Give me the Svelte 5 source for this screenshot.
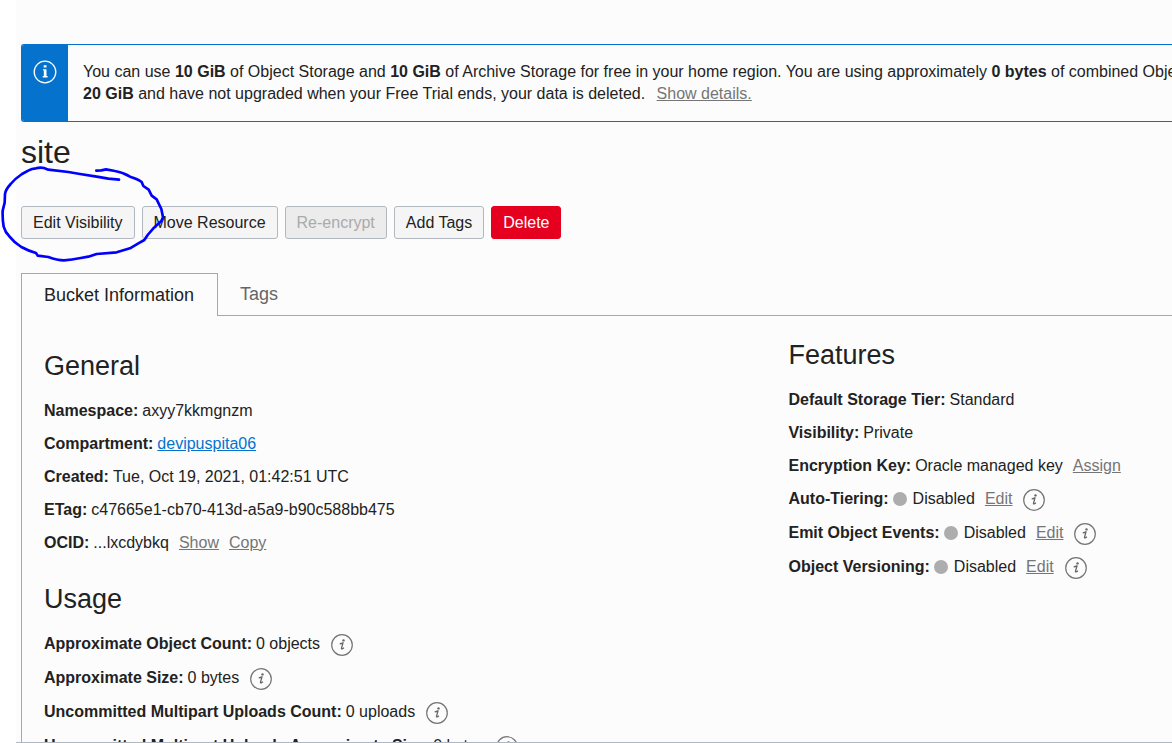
<script>
  const general = [
    { label: 'Namespace', value: 'axyy7kkmgnzm' },
    { label: 'Compartment', link: 'devipuspita06' },
    { label: 'Created', value: 'Tue, Oct 19, 2021, 01:42:51 UTC' },
    { label: 'ETag', value: 'c47665e1-cb70-413d-a5a9-b90c588bb475' },
    { label: 'OCID', value: '...lxcdybkq', actions: ['Show', 'Copy'] }
  ];
  const usage = [
    { label: 'Approximate Object Count', value: '0 objects', info: true },
    { label: 'Approximate Size', value: '0 bytes', info: true },
    { label: 'Uncommitted Multipart Uploads Count', value: '0 uploads', info: true },
    { label: 'Uncommitted Multipart Uploads Approximate Size', value: '0 bytes', info: true }
  ];
  const features = [
    { label: 'Default Storage Tier', value: 'Standard' },
    { label: 'Visibility', value: 'Private' },
    { label: 'Encryption Key', value: 'Oracle managed key', actions: ['Assign'] },
    { label: 'Auto-Tiering', value: 'Disabled', dot: true, actions: ['Edit'], info: true },
    { label: 'Emit Object Events', value: 'Disabled', dot: true, actions: ['Edit'], info: true },
    { label: 'Object Versioning', value: 'Disabled', dot: true, actions: ['Edit'], info: true }
  ];
</script>

{#snippet details(rows)}
  <dl>
    {#each rows as row}
      <div class="row" class:tall={row.info}>
        <dt>{row.label}:</dt>
        <dd>
          {#if row.dot}<span class="dot"></span>{/if}
          {#if row.link}<a class="primary" href="#compartment">{row.link}</a>{/if}
          {#if row.value}<span>{row.value}</span>{/if}
          {#each row.actions ?? [] as action}
            <a class="action" href="#{action.toLowerCase()}">{action}</a>
          {/each}
          {#if row.info}
            <button class="info" aria-label="About {row.label}">
              <svg viewBox="0 0 22 22" width="22" height="22" aria-hidden="true">
                <circle cx="11" cy="11" r="10.3" fill="none" stroke="#757575" stroke-width="1.2" />
                <circle cx="12.5" cy="6.4" r="1.2" fill="#666" />
                <path d="M8.7 9.8 Q10.4 9.6 12 8.8 L10.5 14.2 Q10.2 15.9 12.9 13.7" fill="none" stroke="#666" stroke-width="1.3" stroke-linejoin="round" />
              </svg>
            </button>
          {/if}
        </dd>
      </div>
    {/each}
  </dl>
{/snippet}

<main>
  <section class="banner">
    <div class="banner-icon">
      <svg viewBox="0 0 24 24" width="24" height="24" aria-hidden="true">
        <circle cx="12" cy="12" r="10.8" fill="none" stroke="#fff" stroke-width="1.3" />
        <path d="M10.7 5.2h2.8v2.4h-2.8z M10 9.2h3.5v6.8h1.1v1.4H9.7v-1.4h1.1v-5.4H10z" fill="#fff" />
      </svg>
    </div>
    <p>
      You can use <b>10 GiB</b> of Object Storage and <b>10 GiB</b> of Archive Storage for free in your home region. You are using approximately <b>0 bytes</b> of combined Object<br />
      <b>20 GiB</b> and have not upgraded when your Free Trial ends, your data is deleted.
      <a class="more" href="#details">Show details.</a>
    </p>
  </section>

  <header>
    <h1>site</h1>
    <div class="buttons">
      <button>Edit Visibility</button>
      <button>Move Resource</button>
      <button disabled>Re-encrypt</button>
      <button>Add Tags</button>
      <button class="danger">Delete</button>
    </div>
    <svg class="ink" viewBox="0 0 504 420" width="168" height="140" aria-hidden="true">
      <path d="M357 149 L325 146 L290 140 L240 132 L205 126 L145 119 L132 114 Q120 111 108 115 Q95 116 86 121 L66 132 Q45 146 32 162 Q16 180 15 192 L14 218 L8 242 Q7 268 11 290 Q16 308 28 319 Q42 337 64 351 Q84 362 108 369 L113 377 L145 381 Q172 391 192 391 Q215 389 242 384 L265 380 L290 372 L350 367 L390 355 L415 340 L433 330 L443 315 L462 293 L484 273 L489 262 L484 237 L470 208 L455 197 L446 179 L430 168 L425 156 Q414 147 390 140 Q370 127 345 123 L318 118 L304 121 L289 122" />
    </svg>
  </header>

  <div class="tabs" role="tablist">
    <button class="tab active" role="tab" aria-selected="true">Bucket Information</button>
    <button class="tab" role="tab" aria-selected="false">Tags</button>
  </div>

  <div class="panel" role="tabpanel">
    <div class="column left">
      <h2>General</h2>
      {@render details(general)}
      <h2 class="next">Usage</h2>
      {@render details(usage)}
    </div>
    <div class="column">
      <h2>Features</h2>
      {@render details(features)}
    </div>
  </div>
</main>

<style>
  :global(body) {
    background: #fff;
  }
  main {
    box-sizing: border-box;
    height: 100vh;
    margin-left: 16px;
    padding: 44px 0 0 5px;
    overflow-x: visible;
    overflow-y: clip;
    background: #fcfcfc;
    border-bottom: 1px solid #b1b7c1;
    color: #222;
    font: 16px/22px "Liberation Sans", Arial, sans-serif;
  }
  .banner {
    display: flex;
    overflow: hidden;
    border: 1px solid #0572ce;
    border-width: 1px 0 1px 1px;
    border-radius: 3px 0 0 3px;
  }
  .banner-icon {
    flex: none;
    width: 46px;
    padding-top: 15px;
    background: #0572ce;
    text-align: center;
  }
  .banner-icon svg {
    margin-right: 1px;
  }
  .banner p {
    margin: 0;
    padding: 16px 0 16px 15px;
    white-space: nowrap;
  }
  .more {
    margin-left: 7px;
    color: #757575;
  }
  header {
    position: relative;
    padding-top: 12px;
  }
  h1 {
    margin: 0 0 36px;
    font-size: 32px;
    font-weight: 400;
    line-height: 36px;
  }
  .buttons {
    display: flex;
    gap: 7px;
  }
  button {
    font: inherit;
  }
  .buttons button {
    height: 33px;
    padding: 0 11px;
    border: 1px solid #b1b8c0;
    border-radius: 3px;
    background: #f5f5f5;
    color: #222;
    white-space: nowrap;
  }
  .buttons button:disabled {
    background: #ececec;
    color: #aaa;
  }
  .buttons .danger {
    border-color: #e5001f;
    background: #e5001f;
    color: #fff;
  }
  .ink {
    position: absolute;
    top: 8px;
    left: -21px;
    pointer-events: none;
  }
  .ink path {
    fill: none;
    stroke: #00f;
    stroke-width: 8;
    stroke-linecap: round;
    stroke-linejoin: round;
  }
  .tabs {
    display: flex;
    margin-top: 34px;
  }
  .tabs::after {
    content: "";
    flex: 1;
    border-bottom: 1px solid #a8a8a8;
  }
  .tab {
    height: 43px;
    padding: 0 22px;
    border: 0;
    border-bottom: 1px solid #a8a8a8;
    background: none;
    color: #666;
    font-size: 18px;
  }
  .tab.active {
    padding: 0 23px 0 22px;
    border: 1px solid #a8a8a8;
    border-bottom: 0;
    color: #222;
  }
  .panel {
    display: grid;
    grid-template-columns: 66fr 34fr;
    padding: 23px 0 0 22px;
    border-left: 1px solid #a8a8a8;
  }
  .left {
    padding-top: 11px;
  }
  h2 {
    margin: 0 0 12px;
    font-size: 27px;
    font-weight: 400;
    line-height: 32px;
  }
  .next {
    margin-top: 24px;
  }
  dl {
    margin: 0;
  }
  .row {
    display: flex;
    align-items: center;
    gap: 4px;
    height: 33px;
    white-space: nowrap;
  }
  .row.tall {
    height: 34px;
  }
  dt {
    font-weight: 700;
  }
  dd {
    display: flex;
    align-items: center;
    margin: 0;
  }
  .dot {
    width: 14px;
    height: 14px;
    margin-right: 6px;
    border-radius: 50%;
    background: #adadad;
  }
  .primary {
    color: #0572ce;
  }
  .action {
    margin-left: 10px;
    color: #757575;
  }
  .info {
    display: flex;
    margin: 1px 0 0 11px;
    padding: 0;
    border: 0;
    background: none;
  }
</style>
